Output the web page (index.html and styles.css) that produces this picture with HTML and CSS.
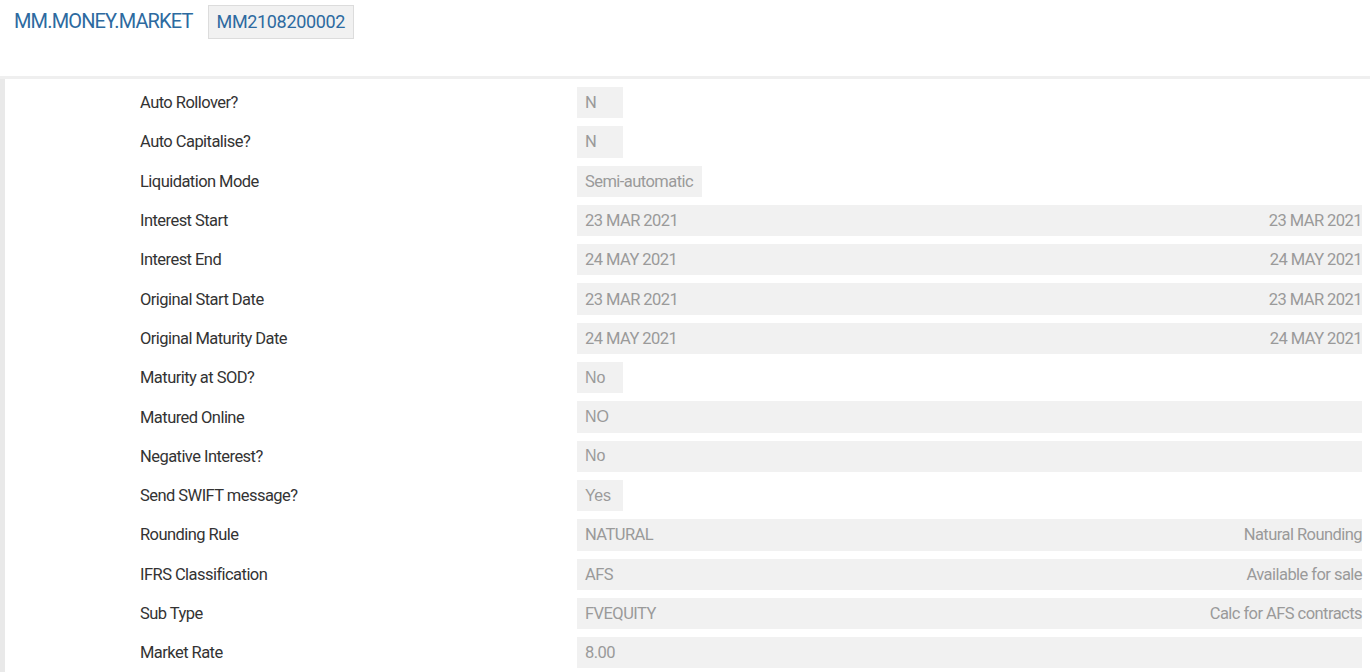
FILE: index.html
```html
<!DOCTYPE html>
<html>
<head>
  <meta charset="UTF-8">
  <title>MM.MONEY.MARKET</title>
  <link rel="stylesheet" href="styles.css">
</head>
<body>
  <div class="header">
    <span class="app-title">MM.MONEY.MARKET</span>
    <span class="record-id">MM2108200002</span>
  </div>

  <div class="details">
    <div class="row">
      <div class="label">Auto Rollover?</div>
      <div class="value short">N</div>
    </div>
    <div class="row">
      <div class="label">Auto Capitalise?</div>
      <div class="value short">N</div>
    </div>
    <div class="row">
      <div class="label">Liquidation Mode</div>
      <div class="value short">Semi-automatic</div>
    </div>
    <div class="row">
      <div class="label">Interest Start</div>
      <div class="value wide"><span>23 MAR 2021</span><span>23 MAR 2021</span></div>
    </div>
    <div class="row">
      <div class="label">Interest End</div>
      <div class="value wide"><span>24 MAY 2021</span><span>24 MAY 2021</span></div>
    </div>
    <div class="row">
      <div class="label">Original Start Date</div>
      <div class="value wide"><span>23 MAR 2021</span><span>23 MAR 2021</span></div>
    </div>
    <div class="row">
      <div class="label">Original Maturity Date</div>
      <div class="value wide"><span>24 MAY 2021</span><span>24 MAY 2021</span></div>
    </div>
    <div class="row">
      <div class="label">Maturity at SOD?</div>
      <div class="value short plain">No</div>
    </div>
    <div class="row">
      <div class="label">Matured Online</div>
      <div class="value wide plain"><span>NO</span></div>
    </div>
    <div class="row">
      <div class="label">Negative Interest?</div>
      <div class="value wide plain"><span>No</span></div>
    </div>
    <div class="row">
      <div class="label">Send SWIFT message?</div>
      <div class="value short plain">Yes</div>
    </div>
    <div class="row">
      <div class="label">Rounding Rule</div>
      <div class="value wide"><span>NATURAL</span><span>Natural Rounding</span></div>
    </div>
    <div class="row">
      <div class="label">IFRS Classification</div>
      <div class="value wide"><span>AFS</span><span>Available for sale</span></div>
    </div>
    <div class="row">
      <div class="label">Sub Type</div>
      <div class="value wide"><span>FVEQUITY</span><span>Calc for AFS contracts</span></div>
    </div>
    <div class="row">
      <div class="label">Market Rate</div>
      <div class="value wide"><span>8.00</span></div>
    </div>
  </div>
</body>
</html>
```

FILE: styles.css
```css
body {
  margin: 0;
  font-family: Roboto, 'Liberation Sans', sans-serif;
  background: white;
  color: #333;
}
.header {
  height: 76px;
  display: flex;
  align-items: flex-start;
  padding-left: 14px;
  border-bottom: 3px solid #efefef;
}
.app-title {
  margin-top: 9px;
  font-size: 20px;
  letter-spacing: -0.85px;
  color: #2d6aa0;
}
.record-id {
  margin-left: 15px;
  margin-top: 5px;
  height: 34px;
  box-sizing: border-box;
  padding: 0 8px;
  line-height: 32px;
  font-size: 18px;
  letter-spacing: -0.35px;
  color: #2d6aa0;
  background: #f1f1f1;
  border: 1px solid #dcdcdc;
}
.details {
  border-left: 5px solid #e9e9e9;
  padding-top: 8px;
  min-height: 600px;
}
.row {
  display: flex;
  align-items: center;
  height: 31.3px;
  margin-bottom: 8px;
}
.label {
  width: 437px;
  padding-left: 135px;
  font-size: 16.5px;
  letter-spacing: -0.55px;
  color: #333;
}
.value {
  height: 100%;
  box-sizing: border-box;
  display: flex;
  align-items: center;
  font-size: 16.5px;
  letter-spacing: -0.55px;
  color: #9a9a9a;
  background: #f1f1f1;
}
.short {
  min-width: 46px;
  padding: 0 9px 0 8px;
}
.wide {
  width: 785px;
  justify-content: space-between;
  padding-left: 8px;
}
.plain {
  font-family: 'Liberation Sans', Arial, sans-serif;
  font-size: 16px;
  letter-spacing: 0;
}
```
